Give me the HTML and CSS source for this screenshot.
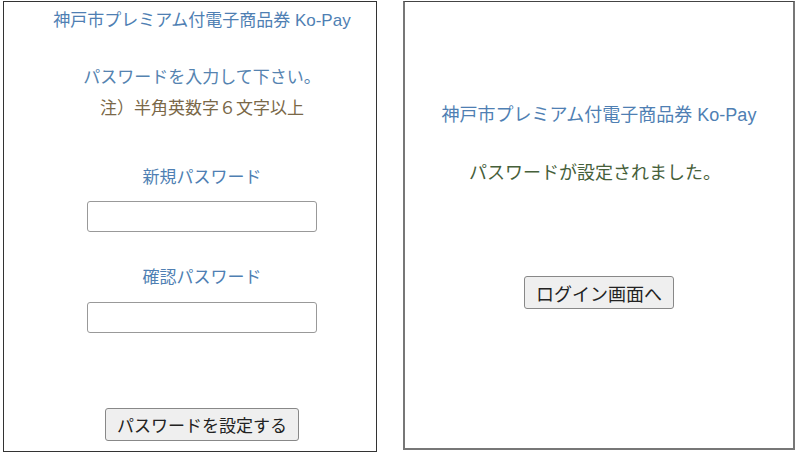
FILE: index.html
```html
<!DOCTYPE html>
<html lang="ja">
<head>
  <meta charset="UTF-8" />
  <meta name="viewport" content="width=device-width, initial-scale=1.0" />
  <title>Ko-Pay パスワード設定</title>
  <link rel="stylesheet" href="styles.css">
</head>
<body>

  <div class="screens">
    <!-- パスワード入力画面 -->
    <div class="panel panel-input">
      <div class="title">神戸市プレミアム付電子商品券 Ko-Pay</div>
      <div class="guide">パスワードを入力して下さい。</div>
      <div class="note">注）半角英数字６文字以上</div>

      <div class="label label-new">新規パスワード</div>
      <input type="password" class="pw-box pw-new">

      <div class="label label-confirm">確認パスワード</div>
      <input type="password" class="pw-box pw-confirm">

      <div class="btn-row btn-row-set">
        <button class="btn btn-set">パスワードを設定する</button>
      </div>
    </div>

    <!-- 設定完了画面 -->
    <div class="panel panel-done">
      <div class="title">神戸市プレミアム付電子商品券 Ko-Pay</div>
      <div class="done-msg">パスワードが設定されました。</div>
      <div class="btn-row btn-row-login">
        <button class="btn btn-login">ログイン画面へ</button>
      </div>
    </div>
  </div>

</body>
</html>
```

FILE: styles.css
```css
body {
  margin: 0;
  font-family: "Liberation Sans", "Noto Sans CJK JP", sans-serif;
  font-size: 17px;
  background: #fff;
}

.screens {
  display: flex;
  align-items: flex-start;
  gap: 26px;
  padding: 1px 0 0 3px;
}

.panel {
  box-sizing: border-box;
  text-align: center;
}

.panel-input {
  width: 374px;
  height: 451px;
  border: 1px solid #333;
  padding: 7px 0 0 24px;
}

.panel-done {
  width: 392px;
  height: 449px;
  border: 2px solid #777;
  border-top: 1px solid #444;
  padding: 101px 0 0 0;
  font-size: 18px;
}

.title,
.guide,
.note,
.label,
.done-msg {
  line-height: 24px;
}

.title {
  color: #4f7fb3;
}

.guide {
  margin-top: 33px;
  color: #5583b0;
}

.note {
  margin-top: 7px;
  color: #7a6848;
}

.label {
  color: #4f7fb3;
}

.label-new {
  margin-top: 45px;
}

.label-confirm {
  margin-top: 34px;
}

.pw-box {
  display: block;
  box-sizing: border-box;
  width: 230px;
  height: 31px;
  margin: 11px auto 0 auto;
  border: 1px solid #999;
  border-radius: 3px;
  background: #fff;
}

.pw-confirm {
  margin-top: 12px;
}

.done-msg {
  margin-top: 34px;
  padding-right: 8px;
  color: #46603a;
}

.btn-row-set {
  margin-top: 75px;
}

.btn-row-login {
  margin-top: 91px;
}

.btn {
  box-sizing: border-box;
  height: 33px;
  font-family: inherit;
  font-size: 17px;
  color: #222;
  background: #efefef;
  border: 1px solid #888;
  border-radius: 3px;
  padding: 0 11px;
}

.btn-login {
  font-size: 18px;
  padding: 0 11px;
}
```
